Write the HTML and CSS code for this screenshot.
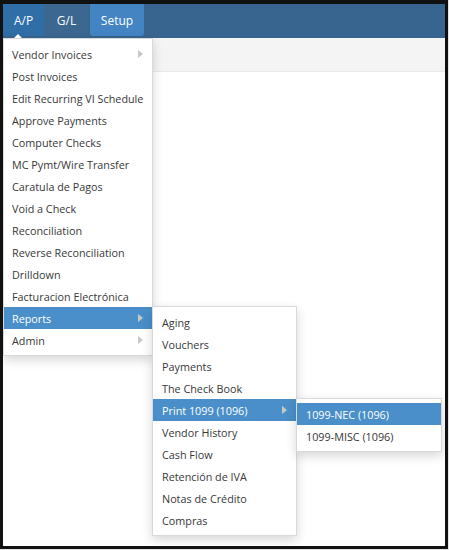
FILE: index.html
```html
<!DOCTYPE html>
<html>
<head>
<meta charset="utf-8">
<link rel="stylesheet" href="styles.css">
</head>
<body>
<div class="frame">
  <nav class="nav">
    <a class="tab tab-active">A/P</a>
    <a class="tab tab-plain">G/L</a>
    <a class="tab tab-setup">Setup</a>
  </nav>
  <div class="subbar"></div>
  <div class="content"></div>

  <ul class="menu menu-main">
    <li class="item has-sub">Vendor Invoices<span class="caret"></span></li>
    <li class="item">Post Invoices</li>
    <li class="item">Edit Recurring VI Schedule</li>
    <li class="item">Approve Payments</li>
    <li class="item">Computer Checks</li>
    <li class="item">MC Pymt/Wire Transfer</li>
    <li class="item">Caratula de Pagos</li>
    <li class="item">Void a Check</li>
    <li class="item">Reconciliation</li>
    <li class="item">Reverse Reconciliation</li>
    <li class="item">Drilldown</li>
    <li class="item">Facturacion Electrónica</li>
    <li class="item has-sub active">Reports<span class="caret"></span>
      <ul class="menu menu-sub menu-reports">
        <li class="item">Aging</li>
        <li class="item">Vouchers</li>
        <li class="item">Payments</li>
        <li class="item">The Check Book</li>
        <li class="item has-sub active">Print 1099 (1096)<span class="caret"></span>
          <ul class="menu menu-sub menu-1099">
            <li class="item active">1099-NEC (1096)</li>
            <li class="item">1099-MISC (1096)</li>
          </ul>
        </li>
        <li class="item">Vendor History</li>
        <li class="item">Cash Flow</li>
        <li class="item">Retención de IVA</li>
        <li class="item">Notas de Crédito</li>
        <li class="item">Compras</li>
      </ul>
    </li>
    <li class="item has-sub">Admin<span class="caret"></span></li>
  </ul>
</div>
</body>
</html>
```
FILE: styles.css
```css
html, body {
  margin: 0;
  padding: 0;
  background: #e4e4e4;
}

.frame {
  position: relative;
  width: 442px;
  height: 542px;
  border-style: solid;
  border-color: #111;
  border-width: 4px 3px 3px 3px;
  background: #fff;
  font-family: "Open Sans", "Noto Sans", sans-serif;
  overflow: hidden;
}

.nav {
  display: flex;
  align-items: flex-start;
  height: 34px;
  background: #38658f;
}

.tab {
  display: flex;
  align-items: center;
  justify-content: center;
  height: 32px;
  color: #fff;
  font-size: 12px;
}

.tab-active {
  width: 41px;
  background: #2f6ea6;
}

.tab-plain {
  width: 45px;
  background: #3b6791;
}

.tab-setup {
  width: 54px;
  margin-left: 1px;
  background: #4484c3;
  border-radius: 0 0 3px 3px;
}

.subbar {
  height: 33px;
  background: #f4f4f4;
  border-bottom: 1px solid #e8e8e8;
}

.menu {
  list-style: none;
  margin: 0;
  padding: 4px 0;
  background: #fff;
  border: 1px solid rgba(0, 0, 0, 0.15);
  box-shadow: 0 4px 10px rgba(0, 0, 0, 0.16);
  box-sizing: border-box;
  font-size: 10.8px;
  color: #383838;
}

.menu-main {
  position: absolute;
  left: 0;
  top: 34px;
  width: 150px;
}

.menu-main::before {
  content: "";
  position: absolute;
  left: 10px;
  top: -5px;
  border-left: 4px solid transparent;
  border-right: 4px solid transparent;
  border-bottom: 4px solid #fff;
}

.item {
  position: relative;
  display: flex;
  align-items: center;
  justify-content: space-between;
  height: 22px;
  padding: 0 9px 0 8px;
  white-space: nowrap;
}

.menu-sub .item {
  padding-left: 9px;
}

.item.active {
  background: #4a8fc9;
  color: #fff;
}

.caret {
  width: 0;
  height: 0;
  border-left: 5px solid #c8c8c8;
  border-top: 4px solid transparent;
  border-bottom: 4px solid transparent;
}

.menu-sub {
  position: absolute;
  left: 100%;
  color: #383838;
}

.menu-reports {
  top: -1px;
  width: 145px;
}

.menu-1099 {
  top: -1px;
  width: 146px;
}
```
